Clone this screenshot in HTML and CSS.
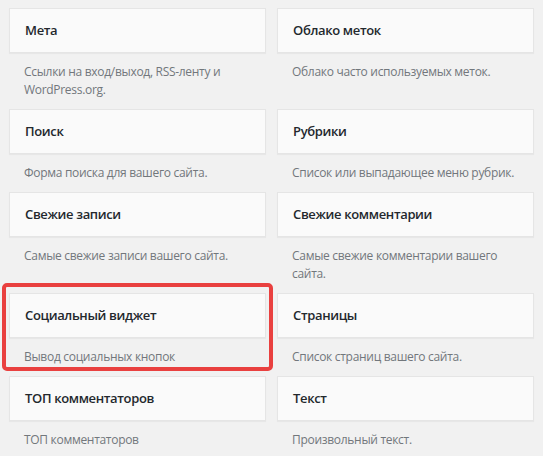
FILE: index.html
```html
<!DOCTYPE html>
<html lang="ru">
<head>
<meta charset="utf-8">
<title>Виджеты</title>
<link rel="stylesheet" href="styles.css">
</head>
<body>
<div class="widget-list">
  <div class="widget">
    <div class="widget-top"><h3 class="widget-title">Мета</h3></div>
    <div class="widget-description">Ссылки на вход/выход, RSS-ленту и WordPress.org.</div>
  </div>
  <div class="widget">
    <div class="widget-top"><h3 class="widget-title">Облако меток</h3></div>
    <div class="widget-description">Облако часто используемых меток.</div>
  </div>
  <div class="widget">
    <div class="widget-top"><h3 class="widget-title">Поиск</h3></div>
    <div class="widget-description">Форма поиска для вашего сайта.</div>
  </div>
  <div class="widget">
    <div class="widget-top"><h3 class="widget-title">Рубрики</h3></div>
    <div class="widget-description">Список или выпадающее меню рубрик.</div>
  </div>
  <div class="widget">
    <div class="widget-top"><h3 class="widget-title">Свежие записи</h3></div>
    <div class="widget-description">Самые свежие записи вашего сайта.</div>
  </div>
  <div class="widget">
    <div class="widget-top"><h3 class="widget-title">Свежие комментарии</h3></div>
    <div class="widget-description">Самые свежие комментарии вашего сайта.</div>
  </div>
  <div class="widget highlighted">
    <div class="widget-top"><h3 class="widget-title">Социальный виджет</h3></div>
    <div class="widget-description">Вывод социальных кнопок</div>
  </div>
  <div class="widget">
    <div class="widget-top"><h3 class="widget-title">Страницы</h3></div>
    <div class="widget-description">Список страниц вашего сайта.</div>
  </div>
  <div class="widget">
    <div class="widget-top"><h3 class="widget-title">ТОП комментаторов</h3></div>
    <div class="widget-description">ТОП комментаторов</div>
  </div>
  <div class="widget">
    <div class="widget-top"><h3 class="widget-title">Текст</h3></div>
    <div class="widget-description">Произвольный текст.</div>
  </div>
</div>
</body>
</html>
```
FILE: styles.css
```css
html, body {
  margin: 0;
  padding: 0;
  background: #f1f1f1;
}

body {
  font-family: "Open Sans", "Liberation Sans", sans-serif;
  font-size: 13px;
  color: #444;
  overflow: hidden;
}

.widget-list {
  display: grid;
  grid-template-columns: 257px 257px;
  column-gap: 11px;
  padding: 8px 9px 0 9px;
}

.widget {
  position: relative;
}

.widget-top {
  background: #fafafa;
  border: 1px solid #e5e5e5;
  box-shadow: 0 1px 1px rgba(0, 0, 0, 0.04);
}

.widget-title {
  margin: 0;
  padding: 15px;
  font-size: 13px;
  font-weight: 600;
  line-height: 13px;
  letter-spacing: -0.35px;
  color: #23282d;
  white-space: nowrap;
  overflow: hidden;
  text-overflow: ellipsis;
}

.widget-description {
  padding: 10px 15px;
  font-size: 12px;
  line-height: 18px;
  letter-spacing: -0.3px;
  color: #72777c;
}

.highlighted::after {
  content: "";
  position: absolute;
  top: -10px;
  left: -7px;
  right: -7px;
  bottom: 5px;
  border: 4px solid #e9403f;
  border-radius: 5px;
  pointer-events: none;
}
```
